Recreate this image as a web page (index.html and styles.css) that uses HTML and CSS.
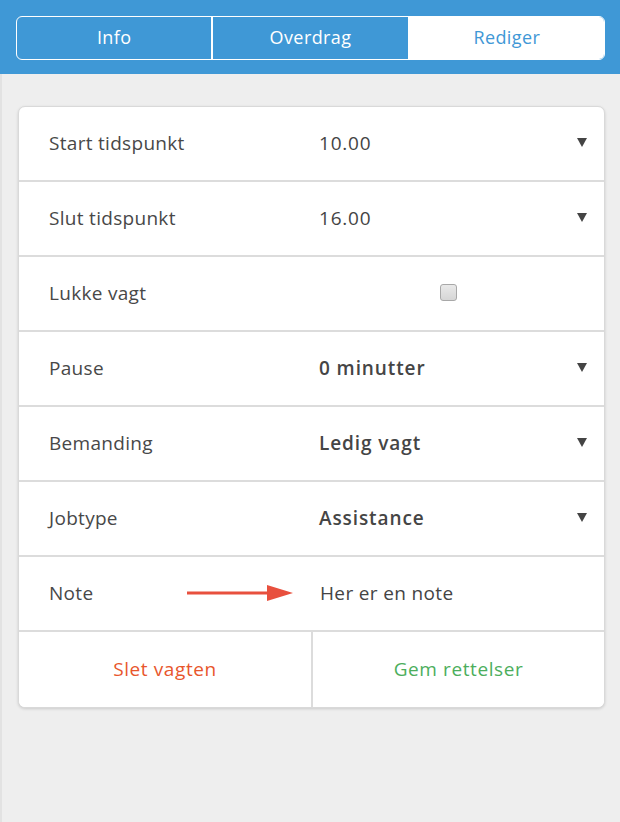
FILE: index.html
```html
<!DOCTYPE html>
<html>
<head>
<meta charset="utf-8">
<link rel="stylesheet" href="styles.css">
</head>
<body>
<div class="page">
  <header class="topbar">
    <nav class="tabs">
      <div class="tab">Info</div>
      <div class="tab">Overdrag</div>
      <div class="tab active">Rediger</div>
    </nav>
  </header>
  <main class="content">
    <section class="card">
      <div class="row">
        <div class="label">Start tidspunkt</div>
        <div class="value">10.00</div>
        <div class="caret"></div>
      </div>
      <div class="row">
        <div class="label">Slut tidspunkt</div>
        <div class="value">16.00</div>
        <div class="caret"></div>
      </div>
      <div class="row">
        <div class="label">Lukke vagt</div>
        <div class="check-cell"><span class="checkbox"></span></div>
      </div>
      <div class="row">
        <div class="label">Pause</div>
        <div class="value strong">0 minutter</div>
        <div class="caret"></div>
      </div>
      <div class="row">
        <div class="label">Bemanding</div>
        <div class="value strong">Ledig vagt</div>
        <div class="caret"></div>
      </div>
      <div class="row">
        <div class="label">Jobtype</div>
        <div class="value strong">Assistance</div>
        <div class="caret"></div>
      </div>
      <div class="row note-row">
        <div class="label">Note</div>
        <svg class="pointer" width="106" height="18" viewBox="0 0 106 18"><rect x="0" y="7.5" width="84" height="3" fill="#e8503e"/><polygon points="80,1 106,9 80,17" fill="#e8503e"/></svg>
        <div class="value note">Her er en note</div>
      </div>
      <div class="actions">
        <button class="btn delete">Slet vagten</button>
        <button class="btn save">Gem rettelser</button>
      </div>
    </section>
  </main>
</div>
</body>
</html>
```

FILE: styles.css
```css
* { box-sizing: border-box; }
html, body { margin: 0; padding: 0; }
body {
  background: #eeeeee;
  font-family: "Open Sans", "Noto Sans", sans-serif;
  color: #444;
}
.page {
  width: 620px;
  min-height: 822px;
  border-left: 2px solid #e2e2e2;
  background: #eeeeee;
}
.topbar {
  background: #3f98d6;
  height: 74px;
  padding: 16px 15px 0 16px;
  margin-left: -2px;
}
.tabs {
  display: flex;
  height: 44px;
  border: 1.5px solid #fff;
  border-radius: 6px;
  overflow: hidden;
}
.tab {
  flex: 1;
  display: flex;
  align-items: center;
  justify-content: center;
  color: #fff;
  font-size: 18px;
  letter-spacing: 0.4px;
  padding-bottom: 2px;
  border-right: 2px solid #fff;
}
.tab:last-child { border-right: none; }
.tab.active {
  background: #fff;
  color: #3f98d6;
}
.content {
  padding: 32px 15px 0 16px;
}
.card {
  background: #fff;
  border: 1px solid #d9d9d9;
  border-radius: 7px;
  box-shadow: 0 1px 3px rgba(0,0,0,0.15);
  overflow: hidden;
}
.row {
  display: flex;
  align-items: center;
  height: 75px;
  border-bottom: 2px solid #dcdcdc;
  padding-left: 30px;
  padding-bottom: 2px;
  font-size: 19px;
}
.label {
  width: 270px;
  flex: none;
  color: #484848;
  letter-spacing: 0.3px;
}
.value {
  flex: 1;
  color: #444;
  letter-spacing: 0.8px;
}
.value.strong { font-weight: 600; color: #454545; letter-spacing: 0.9px; }
.value.note { letter-spacing: 0.35px; }
.caret {
  width: 0; height: 0;
  border-left: 5px solid transparent;
  border-right: 5px solid transparent;
  border-top: 9px solid #444;
  margin-right: 17px;
}
.check-cell {
  flex: 1;
  padding-left: 121px;
  display: flex;
  align-items: center;
}
.checkbox {
  width: 17px;
  height: 17px;
  border: 1px solid #a8a8a8;
  border-radius: 3px;
  background: linear-gradient(#e9e9e9, #d6d6d6);
}
.note-row .label { width: 138px; }
.pointer { flex: none; margin-right: 27px; }
.actions {
  display: flex;
  height: 75px;
}
.btn {
  flex: 1;
  border: none;
  background: #fff;
  font-family: inherit;
  font-size: 19px;
  letter-spacing: 0.6px;
  padding: 0 0 2px;
}
.btn.delete { color: #e8562c; border-right: 2px solid #dcdcdc; flex: 0 0 294px; }
.btn.save { color: #4cae5c; }
```
